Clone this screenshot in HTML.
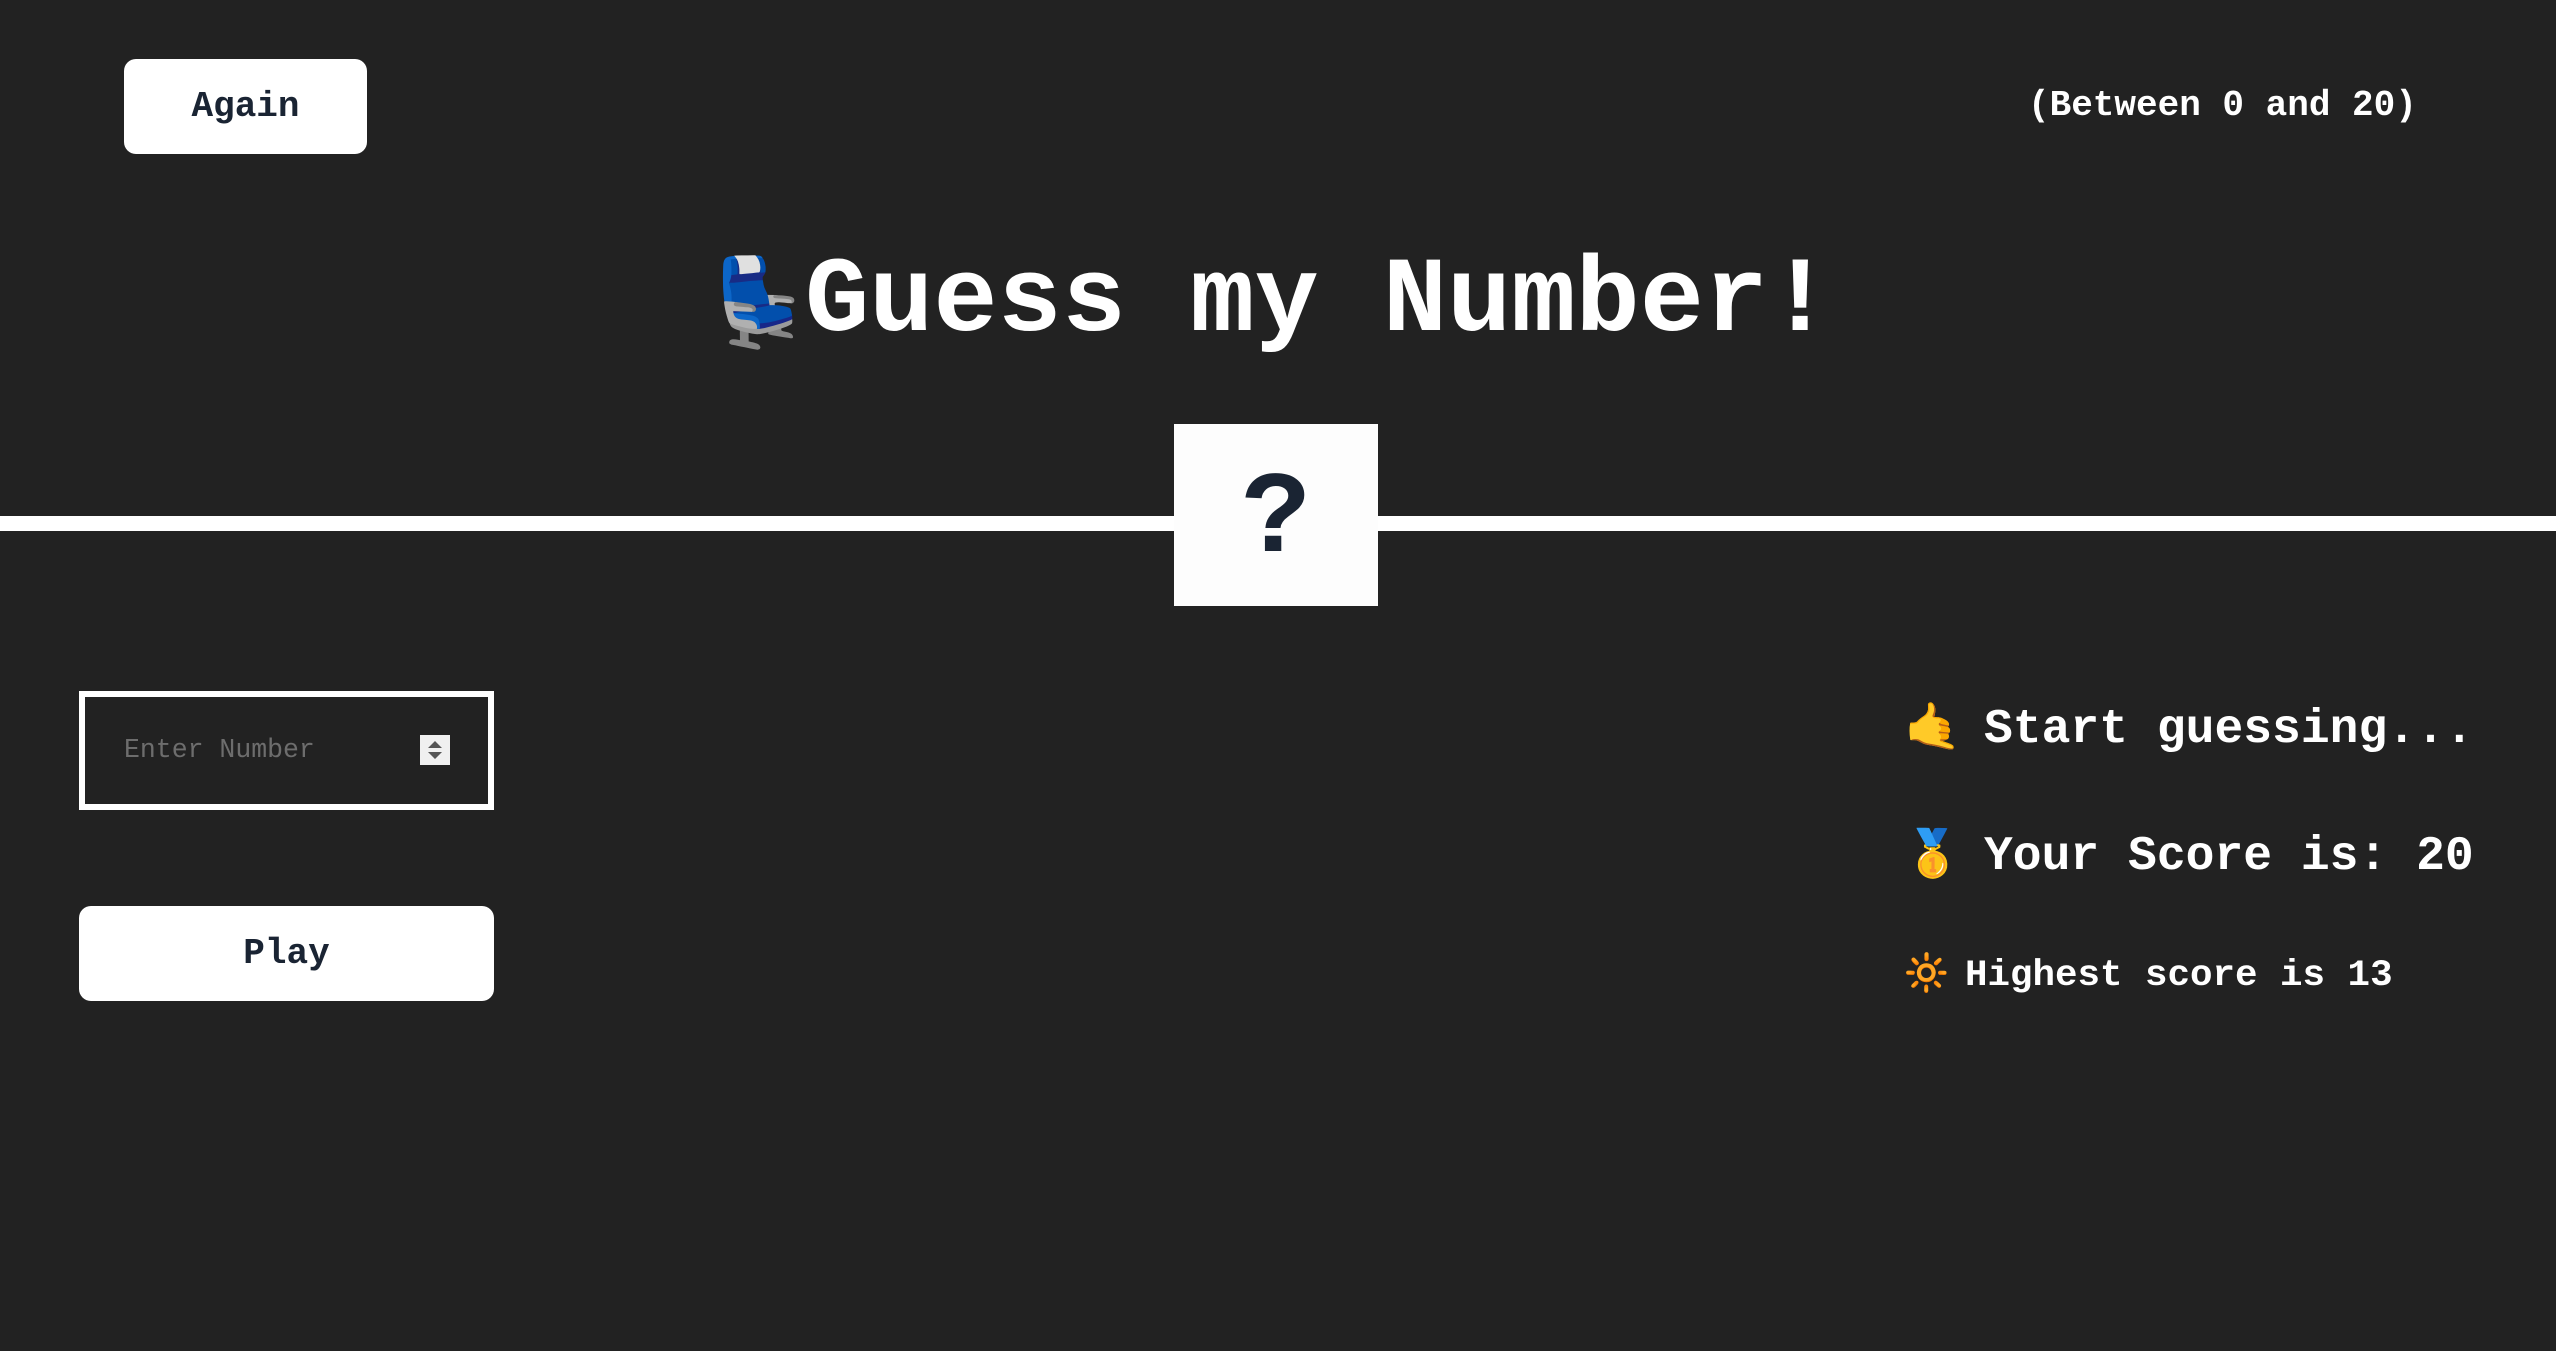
<!DOCTYPE html>
<html><head><meta charset="utf-8"><style>
html,body{margin:0;padding:0;background:#222;width:2556px;height:1351px;overflow:hidden;font-family:"Liberation Mono","DejaVu Sans Mono",monospace;color:#fff;}
.abs{position:absolute;}
.btn{background:#fff;color:#1a2433;border-radius:12px;font-weight:bold;display:flex;align-items:center;justify-content:center;}
.e{font-family:"Noto Color Emoji","DejaVu Sans",sans-serif;}
</style></head><body>
<div class="abs btn" style="left:124px;top:59px;width:243px;height:95px;font-size:36px;">Again</div>
<div class="abs" style="left:2028px;top:83px;font-size:36px;font-weight:bold;line-height:46px;white-space:pre;">(Between 0 and 20)</div>
<div class="abs" style="left:705px;top:232px;height:140px;display:flex;align-items:center;white-space:pre;">
<span class="e" style="font-size:86px;width:100px;display:inline-block;">💺</span><span style="font-size:107px;font-weight:bold;">Guess my Number!</span></div>
<div class="abs" style="left:0;top:516px;width:2556px;height:15px;background:#fff;"></div>
<div class="abs" style="left:1174px;top:424px;width:204px;height:182px;background:#fdfdfd;color:#1a2433;font-size:116px;font-weight:bold;display:flex;align-items:center;justify-content:center;padding-top:10px;box-sizing:border-box;">?</div>
<div class="abs" style="left:79px;top:691px;width:403px;height:107px;border:6px solid #fff;"></div>
<div class="abs" style="left:124px;top:733px;font-size:26.5px;color:#6d6d6d;line-height:34px;">Enter Number</div>
<div class="abs" style="left:420px;top:735px;width:30px;height:30px;background:#f0f0f0;">
<svg width="30" height="30"><path d="M8 13 L15 6 L22 13Z M8 17 L22 17 L15 24Z" fill="#555"/></svg></div>
<div class="abs btn" style="left:79px;top:906px;width:415px;height:95px;font-size:36px;">Play</div>
<div class="abs" style="left:1904px;top:697px;font-size:48px;font-weight:bold;line-height:60px;white-space:pre;"><span class="e" style="display:inline-block;width:80px;font-size:46px;">🤙</span>Start guessing...</div>
<div class="abs" style="left:1904px;top:824px;font-size:48px;font-weight:bold;line-height:60px;white-space:pre;"><span class="e" style="display:inline-block;width:80px;font-size:46px;">🥇</span>Your Score is: 20</div>
<div class="abs" style="left:1904px;top:950px;font-size:37.5px;font-weight:bold;line-height:46px;white-space:pre;"><span class="e" style="display:inline-block;width:61px;font-size:36px;color:#f5b400;">🔆</span>Highest score is 13</div>
</body></html>
